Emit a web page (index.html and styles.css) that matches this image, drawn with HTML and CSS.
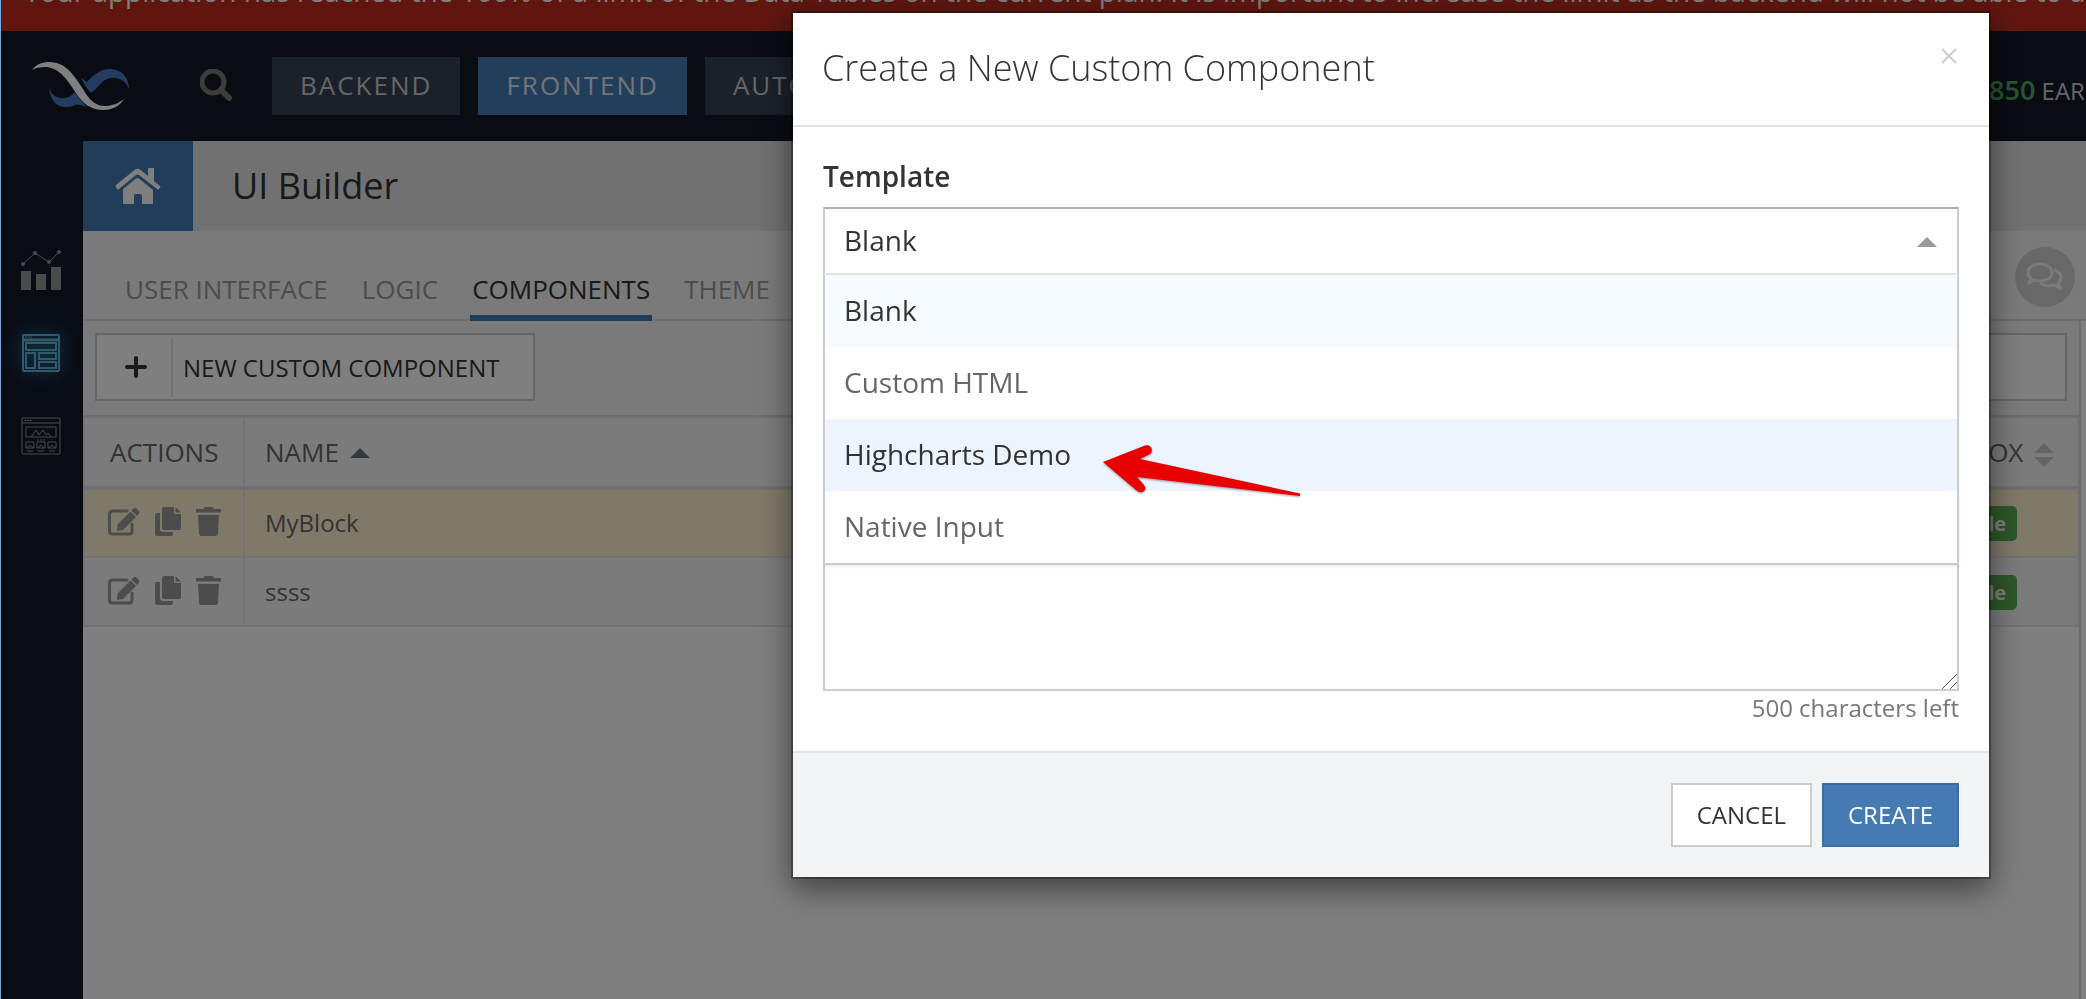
FILE: index.html
```
<!DOCTYPE html>
<html lang="en">
<head>
    <meta charset="UTF-8">
    <meta name="viewport" content="width=device-width, initial-scale=1.0">
    <title>UI Builder</title>
    <link rel="stylesheet" href="styles.css">
</head>
<body>
    <svg class="sprite" aria-hidden="true">
        <symbol id="icon-edit" viewBox="0 0 32 29">
            <path d="M19 4H4.500Q1.500 4 1.500 7V24Q1.500 27 4.500 27H21Q24 27 24 24V17" fill="none" stroke="currentColor" stroke-width="3" stroke-linecap="round"/>
            <path d="M9.500 17.500L22.500 4.500L28 10L15 23L9 24Z"/>
            <path d="M23.500 3.500L25.500 1.500Q27 0 28.500 1.500L31 4Q32 5 31 6.500L29 9Z"/>
        </symbol>
        <symbol id="icon-copy" viewBox="0 0 26 29">
            <path d="M7 2Q7 0 9 0H19V6Q19 7 20 7H26V21Q26 23 24 23H9Q7 23 7 21Z"/>
            <path d="M20.500 0L26 5.500H20.500Z"/>
            <path d="M2 6H5V22Q5 25 8 25H18V27Q18 29 16 29H2Q0 29 0 27V8Q0 6 2 6Z"/>
        </symbol>
        <symbol id="icon-trash" viewBox="0 0 25 29">
            <path d="M0 2H7L9 0H16L18 2H25V5.500H0Z"/>
            <path d="M2 8H23L22 26.500Q21.800 29 19.500 29H5.500Q3.200 29 3 26.500Z"/>
        </symbol>
    </svg>

    <div class="banner">
        <span class="banner-text">Your application has reached the 100% of a limit of the Data Tables on the current plan. It is important to increase the limit as the backend will not be able to accept new tables.</span>
    </div>

    <header class="header">
        <a href="#" class="logo" aria-label="Home">
            <svg width="98" height="50" viewBox="33 60 98 50">
                <path fill="#4a78c4" d="M82 77L88 81C94 74 102 68 111 68C123 68 130 77 130 88C127 80 120 76 112 77C103 78 99 87 92 92C88 88 85 83 82 77Z"/>
                <path fill="#4a78c4" d="M50 87C53 95 59 98 65 97C70 97 73 94 76 91C79 97 84 102 88 106C82 104 79 103 76 104C73 106 69 106 66 106C56 106 51 97 50 87Z"/>
                <path fill="#fff" d="M33 69C37 63 44 61 50 61C66 61 74 73 80 82C87 92 92 105 106 105C115 105 121 101 125 98C121 105 113 109 105 109C92 109 84 103 77 92C69 80 61 67 47 66C41 66 36 67 33 69Z"/>
            </svg>
        </a>
        <button class="search" aria-label="Search">
            <svg width="34" height="34" viewBox="0 0 34 34" fill="none" stroke="currentColor">
                <circle cx="13" cy="13" r="11" stroke-width="5"/>
                <path d="M21 21L29 29" stroke-width="6" stroke-linecap="round"/>
            </svg>
        </button>
        <nav class="nav">
            <a href="#">BACKEND</a>
            <a href="#" class="active">FRONTEND</a>
            <a href="#">AUTOMATION</a>
        </nav>
        <div class="points"><b>850</b> EARNED</div>
    </header>

    <div class="layout">
        <aside class="sidebar">
            <a href="#" aria-label="Analytics">
                <svg width="40" height="40" viewBox="0 0 40 40" fill="currentColor">
                    <path d="M0 21H10V40H0ZM15 24H25V40H15ZM30 17H40V40H30Z"/>
                    <path d="M2 14L14 3L28 12L38 2" fill="none" stroke="currentColor"/>
                    <circle cx="2" cy="14" r="2"/>
                    <circle cx="14" cy="3" r="2"/>
                    <circle cx="28" cy="12" r="2"/>
                    <circle cx="38" cy="2" r="2"/>
                </svg>
            </a>
            <a href="#" class="active" aria-label="UI Builder">
                <svg width="38" height="38" viewBox="0 0 38 38" fill="none" stroke="currentColor" stroke-width="2">
                    <rect x="1" y="1" width="36" height="36" rx="1"/>
                    <path d="M1 6H37" stroke-width="3"/>
                    <path d="M3 3H10" stroke-width="1" stroke-dasharray="2 1"/>
                    <rect x="4" y="9" width="30" height="7"/>
                    <rect x="4" y="19" width="9" height="15"/>
                    <rect x="17" y="19" width="17" height="6"/>
                    <rect x="17" y="28" width="17" height="6"/>
                </svg>
            </a>
            <a href="#" aria-label="Blocks">
                <svg width="40" height="38" viewBox="0 0 40 38" fill="none" stroke="currentColor">
                    <rect x="1" y="1" width="38" height="36" rx="1"/>
                    <path d="M1 6H39"/>
                    <path d="M3 3.500H11M16 23H24" stroke-dasharray="2 1"/>
                    <rect x="5" y="10" width="30" height="10"/>
                    <path d="M10 20L15 13L18 18L22 13L25 18L27 16L30 20"/>
                    <path d="M5 25H13V31H5ZM16 25H24V31H16ZM27 25H35V31H27ZM6 34H12M17 34H23M28 34H34"/>
                    <path d="M6 31Q9 26 12 31M17 31Q20 26 23 31M28 31Q31 26 34 31"/>
                </svg>
            </a>
        </aside>

        <main class="main">
            <div class="title-row">
                <a href="#" class="home" aria-label="Home">
                    <svg width="46" height="37" viewBox="0 0 46 37" fill="currentColor">
                        <path d="M1 17L20 1.500Q22.500 0 25 1.500L33 8V1Q33 0 34 0H38Q39 0 39 1V13L45 18Q46 19 45 20L43.500 21.500Q43 22 42 21L24 7Q22.500 6 21 7L4 21Q3 22 2 21L1 19.500Q0 18 1 17Z"/>
                        <path d="M8 21L21 10.500Q22.500 9.500 24 10.500L38 22V35Q38 36 37 36H27V28Q27 26 25 26H21Q19 26 19 28V36H9Q8 36 8 35Z"/>
                    </svg>
                </a>
                <h1>UI Builder</h1>
            </div>

            <div class="tabs-row">
                <nav class="tabs">
                    <a href="#">USER INTERFACE</a>
                    <a href="#">LOGIC</a>
                    <a href="#" class="active">COMPONENTS</a>
                    <a href="#">THEME</a>
                </nav>
                <button class="chat" aria-label="Feedback">
                    <svg width="38" height="30" viewBox="0 0 38 30" fill="none" stroke="currentColor" stroke-width="3" stroke-linejoin="round">
                        <path d="M14 2C20 2 26 5 26 11C26 16 20 19 14 19C12 19 10 19 8 18L3 21L5 16C3 15 2 13 2 11C2 5 8 2 14 2Z"/>
                        <path d="M28 8C32 9 35 12 35 15C35 18 34 20 32 21L35 27L28 23C22 25 16 23 14 20"/>
                    </svg>
                </button>
            </div>

            <div class="panel">
                <div class="toolbar">
                    <button class="new-component">
                        <span class="plus">
                            <svg width="22" height="22" viewBox="0 0 22 22" stroke="currentColor" stroke-width="4" stroke-linecap="round"><path d="M11 2V20M2 11H20"/></svg>
                        </span>
                        <span class="new-component-text">NEW CUSTOM COMPONENT</span>
                    </button>
                    <input type="text" class="filter" aria-label="Filter components">
                </div>

                <table class="components">
                    <thead>
                        <tr>
                            <th class="actions">ACTIONS</th>
                            <th>NAME <i class="arrow-up"></i></th>
                            <th class="toolbox">TOOLBOX <span class="sort"><i class="arrow-up"></i><i class="arrow-down"></i></span></th>
                        </tr>
                    </thead>
                    <tbody>
                        <tr class="selected">
                            <td class="actions">
                                <div class="row-actions">
                                    <button aria-label="Edit"><svg width="32" height="29"><use href="#icon-edit"/></svg></button>
                                    <button aria-label="Copy"><svg width="26" height="29"><use href="#icon-copy"/></svg></button>
                                    <button aria-label="Delete"><svg width="25" height="29"><use href="#icon-trash"/></svg></button>
                                </div>
                            </td>
                            <td>MyBlock</td>
                            <td class="toolbox"><span class="badge">Available</span></td>
                        </tr>
                        <tr>
                            <td class="actions">
                                <div class="row-actions">
                                    <button aria-label="Edit"><svg width="32" height="29"><use href="#icon-edit"/></svg></button>
                                    <button aria-label="Copy"><svg width="26" height="29"><use href="#icon-copy"/></svg></button>
                                    <button aria-label="Delete"><svg width="25" height="29"><use href="#icon-trash"/></svg></button>
                                </div>
                            </td>
                            <td>ssss</td>
                            <td class="toolbox"><span class="badge">Available</span></td>
                        </tr>
                    </tbody>
                </table>
            </div>
        </main>
    </div>

    <div class="backdrop"></div>

    <div class="modal" role="dialog" aria-labelledby="modalTitle">
        <div class="modal-header">
            <h2 id="modalTitle">Create a New Custom Component</h2>
            <button class="close" aria-label="Close">
                <svg width="16" height="16" viewBox="0 0 16 16" stroke="currentColor" stroke-width="2"><path d="M1 1L15 15M15 1L1 15"/></svg>
            </button>
        </div>
        <div class="modal-body">
            <label for="template">Template</label>
            <div class="dropdown">
                <select id="template">
                    <option>Blank</option>
                    <option>Custom HTML</option>
                    <option>Highcharts Demo</option>
                    <option>Native Input</option>
                </select>
                <i class="arrow-up"></i>
                <ul class="menu" role="listbox">
                    <li class="current" role="option">Blank</li>
                    <li role="option">Custom HTML</li>
                    <li class="hover" role="option">Highcharts Demo</li>
                    <li role="option">Native Input</li>
                </ul>
                <svg class="pointer" width="200" height="50" viewBox="0 0 200 50">
                    <path fill="#e80000" d="M0 17L42 .500Q47 -1 48.500 3.500Q50 8 45 10L37 14L197 48.500V51L34 32L41 40Q44 44 40.500 46.500Q37 48.500 33 45Z"/>
                </svg>
            </div>
            <label for="name">Name</label>
            <input type="text" id="name">
            <label for="description">Description</label>
            <textarea id="description"></textarea>
            <div class="hint">500 characters left</div>
        </div>
        <div class="modal-footer">
            <button class="btn">CANCEL</button>
            <button class="btn btn-primary">CREATE</button>
        </div>
    </div>
</body>
</html>
```

FILE: styles.css
```
* {
    box-sizing: border-box;
}

html {
    border-left: 1px solid #78a8dc;
}

body {
    font-family: 'Open Sans', sans-serif;
    font-size: 24px;
    color: #333;
    background: #fff;
    margin: 0;
    display: flex;
    flex-direction: column;
    height: 100vh;
    overflow: hidden;
}

a {
    color: inherit;
    text-decoration: none;
}

button {
    font-family: inherit;
    color: inherit;
    border: none;
    background: none;
    padding: 0;
    cursor: pointer;
}

svg {
    display: block;
}

.sprite {
    position: absolute;
    width: 0;
    height: 0;
}

.banner {
    display: flex;
    align-items: flex-end;
    height: 31px;
    padding: 0 0 21px 23px;
    background: #c02c1e;
    color: #fff;
    font-size: 28px;
    line-height: 38px;
    white-space: nowrap;
}

.header {
    display: flex;
    align-items: center;
    height: 110px;
    background: #121826;
    flex-shrink: 0;
}

.logo {
    margin-left: 31px;
}

.search {
    margin: 0 38px 0 70px;
    color: #7a7a78;
}

.nav {
    flex: 1;
    display: flex;
    gap: 18px;
}

.nav a {
    padding: 0 28px 2px;
    line-height: 56px;
    font-size: 26px;
    letter-spacing: 2px;
    background: #364254;
    color: #ccc;
}

.nav a.active {
    background: #467cb4;
    color: #e4e8ee;
}

.points {
    width: 97px;
    overflow: hidden;
    white-space: nowrap;
    color: #ccc;
    padding-top: 6px;
}

.points b {
    font-size: 27px;
    font-weight: 600;
    color: #50a860;
}

.layout {
    flex: 1;
    display: flex;
}

.sidebar {
    width: 82px;
    padding: 87px 2px 0 0;
    background: #121826;
    color: #969696;
}

.sidebar a {
    display: flex;
    align-items: center;
    justify-content: center;
    height: 83px;
}

.sidebar a.active {
    color: #5cb4d8;
    filter: drop-shadow(0 0 10px #3090c8);
}

.main {
    flex: 1;
    min-width: 0;
    display: flex;
    flex-direction: column;
}

.title-row {
    display: flex;
    align-items: center;
    height: 90px;
    background: #e2e3e5;
}

.home {
    display: flex;
    align-items: center;
    justify-content: center;
    width: 110px;
    height: 90px;
    background: #407ab2;
    color: #fff;
}

.title-row h1 {
    margin: 0 0 0 39px;
    padding-bottom: 2px;
    font-size: 36px;
    font-weight: 400;
}

.tabs-row {
    display: flex;
    justify-content: space-between;
    align-items: flex-end;
    height: 90px;
    padding: 0 11px 0 40px;
    background: #f4f5f7;
    border-bottom: 2px solid #dcdee0;
}

.tabs {
    display: flex;
    gap: 30px;
    font-size: 26px;
    color: #999;
    margin-bottom: -2px;
}

.tabs a {
    padding: 0 2px 6px;
    line-height: 36px;
    height: 50px;
    border-bottom: 6px solid transparent;
}

.tabs a.active {
    color: #333;
    border-color: #407ab2;
}

.chat {
    display: flex;
    align-items: center;
    justify-content: center;
    width: 60px;
    height: 60px;
    margin-bottom: 12px;
    border-radius: 50%;
    background: #d0d1d2;
    color: #f4f5f7;
}

.panel {
    flex: 1;
    margin-right: 5px;
    border-right: 2px solid #d4d6d8;
}

.toolbar {
    display: flex;
    justify-content: space-between;
    padding: 12px;
    height: 94px;
    background: #f4f5f7;
}

.new-component {
    display: flex;
    align-items: center;
    height: 68px;
    padding-right: 34px;
    background: #fff;
    border: 2px solid #ccc;
}

.plus {
    display: flex;
    align-items: center;
    justify-content: center;
    width: 76px;
    height: 60px;
    padding-left: 4px;
    border-right: 2px solid #e4e4e4;
}

.new-component-text {
    padding-left: 10px;
    font-size: 24px;
}

.filter {
    width: 400px;
    height: 68px;
    background: #fff;
    border: 2px solid #ccc;
}

.components {
    width: 100%;
    border-collapse: collapse;
    background: #f6f7f9;
}

.components th,
.components td {
    padding: 0 20px;
    text-align: left;
    border: 2px solid #e6e7e9;
}

.components th {
    height: 71px;
    font-size: 26px;
    font-weight: 400;
    color: #666;
    border-top: 3px solid #dcdee0;
    border-bottom: 4px solid #dfe1e6;
}

.components td {
    height: 69px;
    color: #666;
}

.components .actions {
    width: 160px;
    padding: 0 0 0 25px;
}

.components .toolbox {
    width: 190px;
    border-left-color: transparent;
    white-space: nowrap;
    padding: 0 0 0 14px;
}

.components .selected {
    background: #fff2d2;
}

.row-actions {
    display: flex;
    align-items: center;
    gap: 15px;
    margin-left: -2px;
    padding-bottom: 2px;
    color: #999;
}

.row-actions svg {
    fill: currentColor;
}

.arrow-up,
.arrow-down {
    display: inline-block;
    border: 10px solid transparent;
}

.arrow-up {
    border-bottom-color: #607080;
    border-top: none;
    vertical-align: 4px;
    margin-left: 4px;
}

.arrow-down {
    border-top-color: #c4c8ca;
    border-bottom: none;
}

.sort {
    display: inline-flex;
    flex-direction: column;
    gap: 4px;
    margin-left: 4px;
    vertical-align: middle;
}

.sort .arrow-up {
    margin: 0;
    border-bottom-color: #c4c8ca;
}

.badge {
    display: inline-block;
    padding: 0 11px;
    line-height: 35px;
    border-radius: 5px;
    background: #5cb054;
    color: #fff;
    font-size: 20px;
    font-weight: 700;
    vertical-align: middle;
}

.backdrop {
    position: fixed;
    inset: 0 0 0 1px;
    background: rgba(0, 0, 0, 0.5);
}

.modal {
    position: fixed;
    top: 13px;
    right: 97px;
    width: 1196px;
    background: #fefefe;
    box-shadow: 0 0 0 2px rgba(0, 0, 0, 0.3), 0 10px 30px 2px rgba(0, 0, 0, 0.5);
}

.modal-header {
    display: flex;
    justify-content: space-between;
    align-items: flex-start;
    padding: 30px 32px 32px 29px;
    border-bottom: 2px solid #e3e5e5;
}

.modal-header h2 {
    margin: 0;
    font-size: 36px;
    line-height: 50px;
    font-weight: 300;
}

.close {
    margin-top: 5px;
    color: #ccc;
}

.modal-body {
    display: flex;
    flex-direction: column;
    padding: 29px 30px 26px;
    border-bottom: 2px solid #e3e5e5;
}

.modal-body label {
    font-size: 28px;
    font-weight: 600;
    line-height: 40px;
    margin-bottom: 11px;
}

.dropdown {
    position: relative;
    margin-bottom: 20px;
}

.dropdown select,
.modal-body input,
.modal-body textarea {
    width: 100%;
    height: 68px;
    padding: 0 19px 2px;
    font-family: inherit;
    font-size: 28px;
    color: #333;
    background: #fefefe;
    border: 2px solid #ccc;
    border-radius: 0;
}

.dropdown select {
    appearance: none;
    display: block;
    border-top-color: #adb0b2;
    border-bottom-color: #e3e5e5;
}

.dropdown > .arrow-up {
    position: absolute;
    top: 30px;
    right: 22px;
    border-bottom-color: #999;
}

.menu {
    position: absolute;
    top: 68px;
    left: 0;
    right: 0;
    margin: 0;
    padding: 0;
    list-style: none;
    background: #fefefe;
    border: 2px solid #ccc;
    border-top: none;
    box-shadow: 0 2px 2px rgba(0, 0, 0, 0.06);
}

.menu li {
    padding: 0 19px 2px;
    font-size: 28px;
    line-height: 70px;
    color: #666;
}

.menu .current {
    color: #333;
    background: #f6fbff;
}

.menu .hover {
    color: #333;
    background: #ecf4ff;
}

/* red arrow drawn over the highlighted option */
.pointer {
    position: absolute;
    top: 238px;
    left: 280px;
    overflow: visible;
    filter: drop-shadow(0 1px 1px rgba(0, 0, 0, 0.4));
}

.modal-body input {
    margin-bottom: 20px;
}

.modal-body textarea {
    height: 206px;
}

.modal-body textarea::-webkit-resizer {
    background: linear-gradient(135deg, transparent 47%, #555 47%, #555 53%, transparent 53%, transparent 74%, #555 74%, #555 80%, transparent 80%);
}

.hint {
    font-size: 24px;
    line-height: 34px;
    text-align: right;
    color: #777;
}

.modal-footer {
    display: flex;
    justify-content: flex-end;
    gap: 10px;
    padding: 30px;
    background: #f3f4f6;
}

.btn {
    height: 64px;
    padding: 0 24px 2px;
    font-size: 24px;
    background: #fff;
    border: 2px solid #ccc;
}

.btn-primary {
    background: #457ab2;
    border-color: #3c6ea4;
    color: #fff;
}
```
